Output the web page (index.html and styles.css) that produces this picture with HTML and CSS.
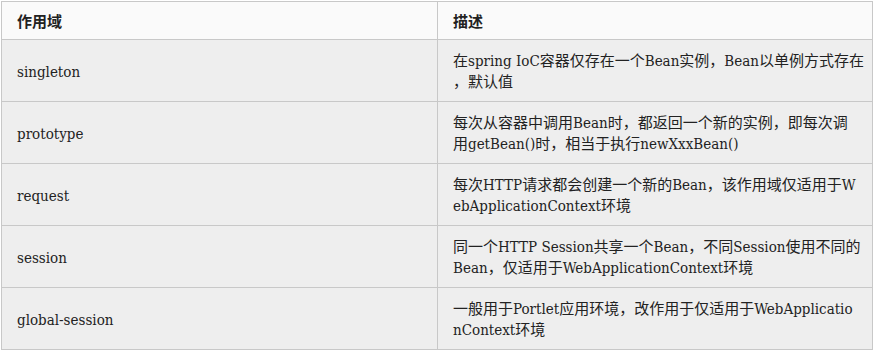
FILE: index.html
```html
<!DOCTYPE html>
<html lang="zh">
<head>
<meta charset="utf-8">
<link rel="stylesheet" href="styles.css">
</head>
<body>
<table class="scope-table">
  <colgroup><col class="col-name"><col class="col-desc"></colgroup>
  <thead>
    <tr><th>作用域</th><th>描述</th></tr>
  </thead>
  <tbody>
    <tr><td>singleton</td><td>在spring IoC容器仅存在一个Bean实例，Bean以单例方式存在<br>，默认值</td></tr>
    <tr><td>prototype</td><td>每次从容器中调用Bean时，都返回一个新的实例，即每次调<br>用getBean()时，相当于执行newXxxBean()</td></tr>
    <tr><td>request</td><td>每次HTTP请求都会创建一个新的Bean，该作用域仅适用于W<br>ebApplicationContext环境</td></tr>
    <tr><td>session</td><td>同一个HTTP Session共享一个Bean，不同Session使用不同的<br>Bean，仅适用于WebApplicationContext环境</td></tr>
    <tr><td>global-session</td><td>一般用于Portlet应用环境，改作用于仅适用于WebApplicatio<br>nContext环境</td></tr>
  </tbody>
</table>
</body>
</html>
```
FILE: styles.css
```css
html, body {
  margin: 0;
  padding: 0;
  background: #ffffff;
}
body {
  padding: 1px 0 0 1px;
}
.scope-table {
  border-collapse: collapse;
  width: 871px;
  table-layout: fixed;
  font-family: "DejaVu Serif Condensed", "DejaVu Serif", "Noto Sans CJK SC", serif;
  font-stretch: condensed;
  font-size: 15px;
  line-height: 21px;
  color: #222;
}
.col-name { width: 436px; }
.col-desc { width: 435px; }
.scope-table th,
.scope-table td {
  border: 1px solid #c8c8c8;
  text-align: left;
  vertical-align: middle;
  white-space: nowrap;
  overflow: hidden;
}
.scope-table th {
  background: #fafafa;
  font-family: "Noto Sans CJK SC", sans-serif;
  font-weight: bold;
  padding: 8px 15px 8px 15px;
  height: 21px;
}
.scope-table td {
  background: #eeeeee;
  padding: 11px 15px 8px 15px;
  height: 42px;
}
```
